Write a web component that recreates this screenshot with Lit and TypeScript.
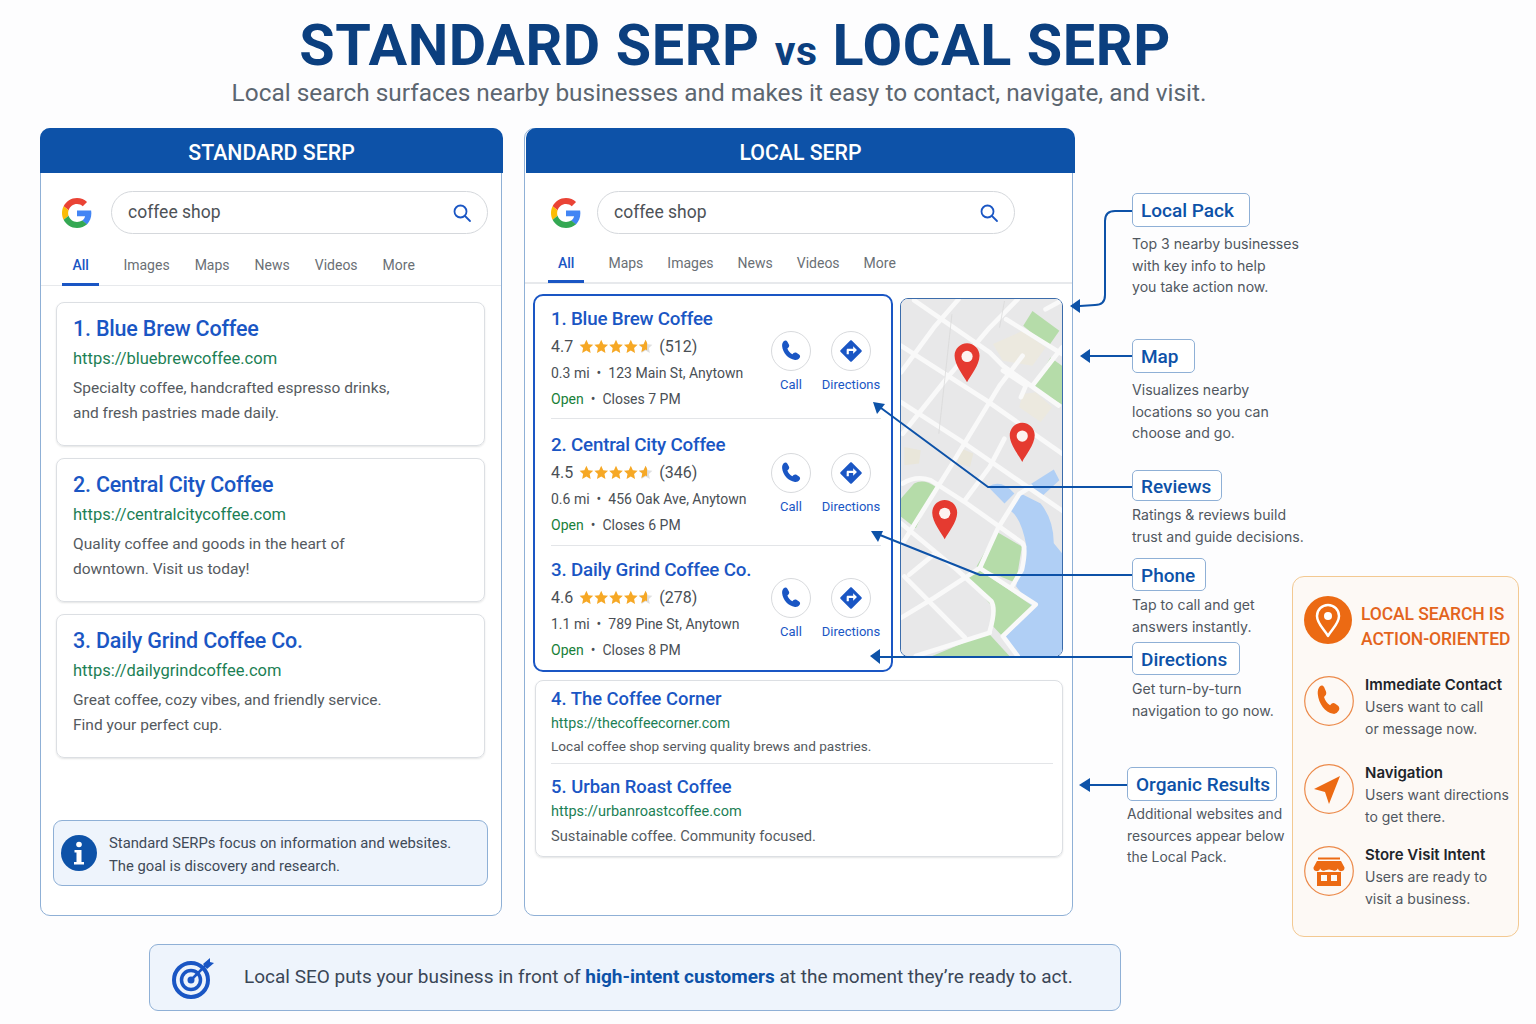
import { LitElement, html, css, svg } from 'lit';
import { customElement } from 'lit/decorators.js';

const standardResults = [
  { title: '1. Blue Brew Coffee', url: 'https://bluebrewcoffee.com', lines: ['Specialty coffee, handcrafted espresso drinks,', 'and fresh pastries made daily.'] },
  { title: '2. Central City Coffee', url: 'https://centralcitycoffee.com', lines: ['Quality coffee and goods in the heart of', 'downtown. Visit us today!'] },
  { title: '3. Daily Grind Coffee Co.', url: 'https://dailygrindcoffee.com', lines: ['Great coffee, cozy vibes, and friendly service.', 'Find your perfect cup.'] },
];

const localResults = [
  { title: '1. Blue Brew Coffee', rating: '4.7', count: '(512)', dist: '0.3 mi', addr: '123 Main St, Anytown', closes: 'Closes 7 PM' },
  { title: '2. Central City Coffee', rating: '4.5', count: '(346)', dist: '0.6 mi', addr: '456 Oak Ave, Anytown', closes: 'Closes 6 PM' },
  { title: '3. Daily Grind Coffee Co.', rating: '4.6', count: '(278)', dist: '1.1 mi', addr: '789 Pine St, Anytown', closes: 'Closes 8 PM' },
];

const organicResults = [
  { title: '4. The Coffee Corner', url: 'https://thecoffeecorner.com', desc: 'Local coffee shop serving quality brews and pastries.' },
  { title: '5. Urban Roast Coffee', url: 'https://urbanroastcoffee.com', desc: 'Sustainable coffee. Community focused.' },
];

const callouts = [
  { label: 'Local Pack', lines: ['Top 3 nearby businesses', 'with key info to help', 'you take action now.'] },
  { label: 'Map', lines: ['Visualizes nearby', 'locations so you can', 'choose and go.'] },
  { label: 'Reviews', lines: ['Ratings & reviews build', 'trust and guide decisions.'] },
  { label: 'Phone', lines: ['Tap to call and get', 'answers instantly.'] },
  { label: 'Directions', lines: ['Get turn-by-turn', 'navigation to go now.'] },
  { label: 'Organic Results', lines: ['Additional websites and', 'resources appear below', 'the Local Pack.'] },
];

const PHONE = 'M6 3.5c1-.8 2.3-.5 2.9.5l1.3 2.4c.5.9.3 1.9-.4 2.6l-.9.8c.6 1.9 2.3 3.9 4.3 4.9l1-.9c.7-.6 1.7-.7 2.5-.2l2.2 1.4c1 .6 1.2 1.9.5 2.8-1 1.3-2.5 2.2-4 1.9C9.500 19 5 13.500 4.400 8 4.200 6.200 4.800 4.500 6 3.500z';
const TURN = 'M21.710 11.290l-9-9c-.39-.39-1.020-.39-1.410 0l-9 9c-.39.39-.39 1.020 0 1.410l9 9c.39.39 1.020.39 1.410 0l9-9c.39-.38.39-1.010 0-1.410zM14 14.500V12h-4v3H8v-4c0-.55.45-1 1-1h5V7.500l3.500 3.500-3.500 3.500z';
const STAR = 'M6.500 0.600l1.800 3.900 4.200.5-3.100 2.900.8 4.200-3.700-2.100-3.700 2.100.8-4.200L.5 5l4.200-.5z';

const googleG = html`<svg class="g-logo" viewBox="0 0 48 48">
  <path fill="#EA4335" d="M24 9.500c3.540 0 6.710 1.220 9.210 3.600l6.850-6.850C35.900 2.380 30.470 0 24 0 14.620 0 6.510 5.380 2.560 13.220l7.980 6.190C12.430 13.720 17.740 9.500 24 9.500z"/>
  <path fill="#4285F4" d="M46.980 24.550c0-1.570-.15-3.090-.38-4.550H24v9.020h12.940c-.58 2.960-2.260 5.480-4.780 7.180l7.730 6c4.510-4.180 7.090-10.360 7.090-17.650z"/>
  <path fill="#FBBC05" d="M10.530 28.590c-.48-1.450-.76-2.990-.76-4.590s.27-3.140.76-4.590l-7.980-6.190C.92 16.460 0 20.120 0 24c0 3.880.92 7.540 2.560 10.780l7.970-6.190z"/>
  <path fill="#34A853" d="M24 48c6.480 0 11.930-2.130 16.030-5.810l-7.730-6c-2.150 1.450-4.920 2.300-8.300 2.300-6.260 0-11.570-4.220-13.470-9.910l-7.980 6.190C6.510 42.620 14.620 48 24 48z"/>
</svg>`;

const searchIcon = html`<svg class="search-icon" viewBox="0 0 20 20" fill="none" stroke="#1a56c4" stroke-width="1.800" stroke-linecap="round">
  <circle cx="8.500" cy="8.500" r="6"/><path d="M13 13l5 5"/>
</svg>`;

const stars = html`<svg class="stars" viewBox="0 0 65 13">
  ${[0, 13, 26, 39].map((x) => svg`<path transform="translate(${x} 0)" fill="#f6a825" d=${STAR}/>`)}
  <path transform="translate(52 0)" fill="#dfdfdf" d=${STAR}/>
  <path transform="translate(52 0)" fill="#f6a825" d="M6.500 0.600l1.300 2.800v6.500l-1.300-.7-3.700 2.100.8-4.200L.5 5l4.200-.5z"/>
</svg>`;

// tip is the point of the marker, in map drawing units
const pin = (cx: number, tip: number) => svg`
  <path fill="#e53a30" d="M${cx} ${tip}c-9-18-38-52-38-80 0-21 17-38 38-38s38 17 38 38c0 28-29 62-38 80z"/>
  <circle cx=${cx} cy=${tip - 78} r="17" fill="#fdf3f0"/>`;

const roads = [
  'M70 28L300 185L340 225L510 345',
  'M350 85L520 190',
  'M30 165L290 330L520 490',
  'M30 335L210 450L400 580L525 665',
  'M35 580Q75 555 120 570L230 640L400 760Q412 775 398 840L368 890',
  'M30 700L200 840L305 935Q320 960 300 1025',
  'M270 835L440 945L340 1040L385 1100',
  'M40 860L225 1045',
  'M30 245L130 110L205 25',
  'M35 430L170 262L300 110L385 25',
  'M35 760L180 530L330 285L400 195',
  'M225 630L300 530L345 445',
  'M430 285L520 170',
  'M30 985L130 925L270 835L325 715L390 612L425 590',
  'M55 855L135 790',
  'M75 1100L300 1030',
  'M340 240L410 285L395 320',
  'M470 55L520 28',
];

const mapArt = html`<svg class="map-art" viewBox="30 24 490 1076" preserveAspectRatio="none">
  <rect x="30" y="24" width="490" height="1076" fill="#e8e8e9"/>
  <path fill="#ece9df" d="M310 160L400 120L470 170L430 225L340 210z"/>
  <path fill="#ece9df" d="M400 310L440 305L490 350L455 395L390 350z"/>
  <path fill="#e9e6da" d="M215 475L250 490L240 530L200 520z"/>
  <path fill="#e9e6da" d="M40 470L90 480L85 520L40 525z"/>
  <path fill="#b5dca9" d="M430 60L512 120L478 168L402 105z"/>
  <path fill="#b5dca9" d="M485 200L520 225V342L430 290z"/>
  <path fill="#b5dca9" d="M30 625L70 580Q100 565 135 590L75 715L30 680z"/>
  <path fill="#b5dca9" d="M320 725L398 770L380 880L260 830z"/>
  <path fill="#b5dca9" d="M225 855L260 835L432 950L335 1037L310 1010L315 960z"/>
  <path fill="#b5dca9" d="M125 1100L295 1030L360 1100z"/>
  <path fill="#b0cff5" d="M295 590Q335 565 375 610L345 640z"/>
  <path fill="#b0cff5" d="M412 590L495 538L512 570L455 622z"/>
  <path fill="#b0cff5" d="M390 608L455 640Q495 690 495 760L520 790V1100H382L345 1045L432 955L380 890L412 770Q395 680 360 660z"/>
  <g fill="none" stroke="#f9f9f9" stroke-width="14" stroke-linejoin="round" stroke-linecap="round">
    ${roads.map((d) => svg`<path d=${d}/>`)}
  </g>
  <path d="M185 70L145 430M345 30L330 110" stroke="#d6d6d6" stroke-width="2" fill="none"/>
  ${pin(231, 275)}
  ${pin(399, 515)}
  ${pin(163, 748)}
</svg>`;

const connectors = html`<svg class="connectors" viewBox="0 0 1536 1024" fill="none" stroke="#0d52a8" stroke-width="2" stroke-linejoin="round">
  <path d="M1132 211H1115Q1105 211 1105 221V295Q1105 305 1095 305L1080 306"/>
  <path d="M1132 356H1090"/>
  <path d="M1132 487H988L881 408"/>
  <path d="M1132 575H980L880 535"/>
  <path d="M1132 657H880"/>
  <path d="M1127 785H1090"/>
  <g fill="#0d52a8" stroke="none">
    <path d="M1070 306L1080 299V313z"/>
    <path d="M1080 356L1090 349V363z"/>
    <path d="M873 402L885 404L877 414z"/>
    <path d="M871 531L883 531L878 542z"/>
    <path d="M870 656L880 649V664z"/>
    <path d="M1079 785L1090 778V792z"/>
  </g>
</svg>`;

@customElement('app-root')
export class AppRoot extends LitElement {
  static styles = css`
    :host {
      display: block;
      position: relative;
      width: 1536px;
      height: 1024px;
      overflow: hidden;
      background: #fdfdfe;
      font-family: Roboto, 'Liberation Sans', sans-serif;
      color: #555a60;
    }

    .top {
      width: 1470px;
      text-align: center;
      padding-top: 12px;
    }
    h1 {
      margin: 0;
      height: 66px;
      line-height: 68px;
      font-size: 57.500px;
      font-weight: 700;
      letter-spacing: 0.6px;
      color: #0b3f7f;
    }
    h1 small {
      font-size: 41px;
    }
    .subtitle {
      height: 32px;
      line-height: 30px;
      padding-right: 32px;
      font-size: 24.400px;
      color: #5c6670;
    }

    .main {
      display: flex;
      margin: 18px 0 0 40px;
      height: 788px;
    }
    .panel {
      box-sizing: border-box;
      background: #fff;
      border: 1px solid #8fb0d6;
      border-radius: 10px;
      height: 788px;
    }
    .panel.standard {
      width: 462px;
    }
    .panel.local {
      width: 549px;
      margin-left: 22px;
    }
    .panel-head {
      height: 45px;
      line-height: 49px;
      margin: -1px -2px 0 -1px;
      background: #0d52a8;
      color: #fff;
      border-radius: 10px 10px 0 0;
      text-align: center;
      font-size: 21.300px;
      font-weight: 500;
    }
    .local .panel-head {
      margin: -1px -3px 0 1px;
    }

    .search {
      display: flex;
      align-items: center;
      height: 43px;
      margin-top: 18px;
    }
    .standard .search {
      padding: 0 13px 0 21px;
      gap: 19px;
    }
    .local .search {
      padding: 0 57px 0 26px;
      gap: 16px;
    }
    .g-logo {
      width: 30px;
      height: 32px;
      flex: none;
    }
    .pill {
      flex: 1;
      display: flex;
      align-items: center;
      justify-content: space-between;
      height: 100%;
      box-sizing: border-box;
      padding: 0 15px 2px 16px;
      border: 1px solid #d5d8dc;
      border-radius: 22px;
      font-size: 17.500px;
      color: #4d5257;
    }
    .search-icon {
      width: 20px;
      height: 20px;
      margin-top: 2px;
    }

    .tabs {
      display: flex;
      gap: 25px;
      border-bottom: 1px solid #e7e9ec;
      font-size: 14px;
      color: #6a6f75;
      height: 42px;
      margin-top: 9px;
      line-height: 45px;
    }
    .local .tabs {
      gap: 24px;
      height: 39px;
      margin-top: 9px;
      line-height: 41px;
      border-bottom-width: 2px;
    }
    .standard .tabs {
      padding-left: 21px;
    }
    .local .tabs {
      padding-left: 23px;
    }
    .tab-all {
      color: #1a56c4;
      font-weight: 500;
      padding: 0 10.500px;
      margin-right: -1px;
      border-bottom: 3px solid #1a56c4;
      height: 40px;
    }
    .local .tab-all {
      padding: 0 10px;
      margin-right: 0;
      height: 37px;
    }

    .std-list {
      display: flex;
      flex-direction: column;
      gap: 12px;
      margin: 16px 16px 0 15px;
    }
    .std-card {
      box-sizing: border-box;
      height: 144px;
      padding: 11px 16px;
      border: 1px solid #dcdfe3;
      border-radius: 8px;
      box-shadow: 0 1px 2px rgba(60, 64, 67, 0.14);
    }
    .std-title {
      font-size: 21.500px;
      letter-spacing: -0.2px;
      line-height: 30px;
      font-weight: 500;
      color: #1a56c4;
    }
    .std-url {
      font-size: 16.500px;
      line-height: 30px;
      color: #1c7f55;
    }
    .std-desc {
      margin-top: 2px;
      font-size: 15.500px;
      line-height: 25px;
    }

    .info {
      display: flex;
      align-items: center;
      gap: 12px;
      box-sizing: border-box;
      height: 66px;
      margin: 62px 13px 0 12px;
      padding-left: 7px;
      border: 1px solid #8fb0d6;
      border-radius: 9px;
      background: #eef4fc;
      font-size: 14.800px;
      line-height: 23px;
      color: #3f4a58;
    }
    .info > div {
      padding-top: 4px;
    }
    .info svg {
      width: 36px;
      height: 36px;
      flex: none;
    }

    .local-top {
      display: flex;
      gap: 7px;
      margin: 10px 9px 0 8px;
      align-items: flex-start;
    }
    .pack {
      box-sizing: border-box;
      width: 360px;
      height: 378px;
      flex: none;
      padding: 0 10px 0 16px;
      border: 2px solid #1a56c4;
      border-radius: 10px;
    }
    .pack-item {
      display: flex;
      justify-content: space-between;
      border-bottom: 1px solid #e3e5e8;
    }
    .pack-item:nth-child(1) {
      height: 123px;
      padding-top: 9px;
      box-sizing: border-box;
    }
    .pack-item:nth-child(2) {
      height: 127px;
      padding-top: 12px;
      box-sizing: border-box;
    }
    .pack-item:nth-child(3) {
      padding-top: 10px;
      border-bottom: 0;
    }
    .pack-title {
      font-size: 18.800px;
      letter-spacing: -0.2px;
      font-weight: 500;
      line-height: 28px;
      color: #1a56c4;
      white-space: nowrap;
    }
    .pack-rating {
      display: flex;
      align-items: center;
      gap: 6px;
      font-size: 16px;
      height: 27px;
      color: #4a4f55;
    }
    .stars {
      width: 74px;
      height: 15px;
    }
    .pack-line {
      font-size: 14px;
      color: #4a4f55;
      height: 27px;
      line-height: 27px;
      white-space: nowrap;
    }
    .pack-line + .pack-line {
      height: 25px;
      line-height: 25px;
    }
    .dot {
      margin: 0 7px;
    }
    .open {
      color: #188038;
    }
    .actions {
      display: flex;
      margin-top: 22px;
    }
    .pack-item:nth-child(1) .actions {
      margin-top: 26px;
    }
    .action {
      width: 60px;
      text-align: center;
      font-size: 13px;
      color: #1a56c4;
    }
    .circle {
      box-sizing: border-box;
      width: 40px;
      height: 40px;
      margin: 0 auto 6px;
      display: flex;
      align-items: center;
      justify-content: center;
      border: 1px solid #d8dadd;
      border-radius: 50%;
    }
    .circle svg {
      width: 26px;
      height: 26px;
      fill: #1a56c4;
    }
    .action:first-child .circle svg {
      width: 28px;
      height: 28px;
    }
    .map {
      width: 163px;
      height: 359px;
      margin-top: 4px;
      flex: none;
      box-sizing: border-box;
      border: 1.500px solid #3b6cab;
      border-radius: 8px;
      overflow: hidden;
    }
    .map-art {
      display: block;
      width: 100%;
      height: 100%;
    }

    .organic {
      box-sizing: border-box;
      height: 177px;
      margin: 8px 9px 0 10px;
      padding: 5px 9px 0 15px;
      border: 1px solid #dcdfe3;
      border-radius: 8px;
      box-shadow: 0 1px 2px rgba(60, 64, 67, 0.14);
    }
    .org-item + .org-item {
      border-top: 1px solid #e3e5e8;
      margin-top: 6px;
      padding-top: 10px;
    }
    .org-item + .org-item .org-url {
      font-size: 14.500px;
      line-height: 24px;
    }
    .org-item + .org-item .org-desc {
      margin-top: 1px;
      font-size: 14.700px;
    }
    .org-title {
      font-size: 18.400px;
      font-weight: 500;
      line-height: 26px;
      color: #1a56c4;
    }
    .org-url {
      font-size: 14.300px;
      line-height: 23px;
      color: #1c7f55;
    }
    .org-desc {
      font-size: 13.600px;
      line-height: 22px;
    }

    .notes {
      box-sizing: border-box;
      width: 160px;
      flex: none;
      margin-left: 59px;
      padding-top: 65px;
      display: grid;
      grid-template-rows: 146px 131px 88px 84px 125px auto;
      font-family: Inter, Roboto, sans-serif;
    }
    .note:last-child {
      margin-left: -5px;
    }
    .note-label {
      display: inline-block;
      box-sizing: border-box;
      height: 34px;
      line-height: 33px;
      padding: 0 10px 0 8px;
      background: #fff;
      border: 1px solid #8fb0d6;
      border-radius: 5px;
      font-size: 19px;
      font-weight: 500;
      color: #0d52a8;
      font-family: Roboto, sans-serif;
    }
    .note:nth-child(1) .note-label,
    .note:nth-child(2) .note-label {
      padding-right: 15px;
    }
    .note:nth-child(3) .note-label {
      height: 31px;
      line-height: 31px;
    }
    .note:nth-child(4) .note-label,
    .note:nth-child(5) .note-label {
      height: 33px;
    }
    .note:nth-child(5) .note-label {
      padding-right: 12px;
    }
    .note:nth-child(6) .note-label {
      padding-right: 6px;
    }
    .note-text {
      margin-top: 6px;
      font-size: 14.100px;
      line-height: 21.500px;
      color: #50575f;
      white-space: nowrap;
    }
    .note:nth-child(n + 3) .note-text {
      margin-top: 3px;
    }
    .note:nth-child(6) .note-text {
      font-size: 13.800px;
    }

    .action-card {
      box-sizing: border-box;
      width: 227px;
      height: 361px;
      flex: none;
      margin-top: 448px;
      padding: 19px 8px 0 11px;
      background: #fdf9f5;
      border: 1px solid #f3c992;
      border-radius: 12px;
      font-family: Inter, Roboto, sans-serif;
    }
    .ac-head {
      display: flex;
      gap: 9px;
      height: 50px;
      font-family: Roboto, sans-serif;
      font-size: 17.500px;
      letter-spacing: -0.1px;
      font-weight: 500;
      line-height: 25px;
      color: #e3641c;
      white-space: nowrap;
    }
    .ac-head > div {
      padding-top: 6px;
    }
    .ac-head svg {
      width: 48px;
      height: 48px;
      flex: none;
    }
    .ac-row {
      display: flex;
      gap: 11px;
    }
    .ac-row svg {
      width: 50px;
      height: 50px;
      margin-top: 2px;
      flex: none;
    }
    .ac-row:nth-child(2) {
      margin-top: 28px;
      height: 88px;
    }
    .ac-row:nth-child(3) {
      height: 82px;
    }
    .ac-title {
      font-size: 15px;
      line-height: 22px;
      font-weight: 600;
      color: #20242a;
    }
    .ac-text {
      font-size: 14px;
      line-height: 22px;
      color: #50575f;
      white-space: nowrap;
    }

    .banner {
      display: flex;
      align-items: center;
      gap: 30px;
      box-sizing: border-box;
      width: 972px;
      height: 67px;
      margin: 28px 0 0 149px;
      padding: 0 0 3px 22px;
      background: #eef4fc;
      border: 1px solid #8fb0d6;
      border-radius: 9px;
      font-size: 19px;
      color: #3a4656;
    }
    .banner svg {
      width: 42px;
      height: 42px;
      flex: none;
      margin-top: 3px;
    }
    .banner b {
      font-weight: 700;
      color: #0d52a8;
    }

    .connectors {
      position: absolute;
      left: 0;
      top: 0;
      width: 1536px;
      height: 1024px;
      pointer-events: none;
    }
  `;

  renderTabs(tabs: string[]) {
    return html`<div class="tabs">
      <div class="tab-all">All</div>
      ${tabs.map((t) => html`<div>${t}</div>`)}
    </div>`;
  }

  renderSearch() {
    return html`<div class="search">
      ${googleG}
      <div class="pill"><span>coffee shop</span>${searchIcon}</div>
    </div>`;
  }

  renderPackItem(r: (typeof localResults)[number]) {
    return html`<div class="pack-item">
      <div>
        <div class="pack-title">${r.title}</div>
        <div class="pack-rating"><span>${r.rating}</span>${stars}<span>${r.count}</span></div>
        <div class="pack-line">${r.dist}<span class="dot">•</span>${r.addr}</div>
        <div class="pack-line"><span class="open">Open</span><span class="dot">•</span>${r.closes}</div>
      </div>
      <div class="actions">
        <div class="action">
          <div class="circle"><svg viewBox="0 0 24 24"><path d=${PHONE}/></svg></div>
          Call
        </div>
        <div class="action">
          <div class="circle"><svg viewBox="0 0 24 24"><path d=${TURN}/></svg></div>
          Directions
        </div>
      </div>
    </div>`;
  }

  render() {
    return html`
      <div class="top">
        <h1>STANDARD SERP <small>vs</small> LOCAL SERP</h1>
        <div class="subtitle">Local search surfaces nearby businesses and makes it easy to contact, navigate, and visit.</div>
      </div>

      <div class="main">
        <section class="panel standard">
          <div class="panel-head">STANDARD SERP</div>
          ${this.renderSearch()}
          ${this.renderTabs(['Images', 'Maps', 'News', 'Videos', 'More'])}
          <div class="std-list">
            ${standardResults.map(
              (r) => html`<div class="std-card">
                <div class="std-title">${r.title}</div>
                <div class="std-url">${r.url}</div>
                <div class="std-desc">${r.lines[0]}<br />${r.lines[1]}</div>
              </div>`
            )}
          </div>
          <div class="info">
            <svg viewBox="0 0 36 36">
              <circle cx="18" cy="18" r="18" fill="#0d52a8" />
              <circle cx="18" cy="9.500" r="2.800" fill="#fff" />
              <path fill="#fff" d="M13.500 15h7v12h2.500v2.500H13V27h2.500v-9.500h-2z" />
            </svg>
            <div>Standard SERPs focus on information and websites.<br />The goal is discovery and research.</div>
          </div>
        </section>

        <section class="panel local">
          <div class="panel-head">LOCAL SERP</div>
          ${this.renderSearch()}
          ${this.renderTabs(['Maps', 'Images', 'News', 'Videos', 'More'])}
          <div class="local-top">
            <div class="pack">${localResults.map((r) => this.renderPackItem(r))}</div>
            <div class="map">${mapArt}</div>
          </div>
          <div class="organic">
            ${organicResults.map(
              (r) => html`<div class="org-item">
                <div class="org-title">${r.title}</div>
                <div class="org-url">${r.url}</div>
                <div class="org-desc">${r.desc}</div>
              </div>`
            )}
          </div>
        </section>

        <div class="notes">
          ${callouts.map(
            (c) => html`<div class="note">
              <div class="note-label">${c.label}</div>
              <div class="note-text">${c.lines.map((l) => html`${l}<br />`)}</div>
            </div>`
          )}
        </div>

        <aside class="action-card">
          <div class="ac-head">
            <svg viewBox="0 0 48 48">
              <circle cx="24" cy="24" r="24" fill="#ec6a13" />
              <path fill="none" stroke="#fff" stroke-width="2.500" stroke-linejoin="round" d="M24 40c-3-6-11-12-11-20a11 11 0 0 1 22 0c0 8-8 14-11 20z" />
              <circle cx="24" cy="20" r="4" fill="#fff" />
            </svg>
            <div>LOCAL SEARCH IS<br />ACTION-ORIENTED</div>
          </div>
          <div class="ac-row">
            <svg viewBox="0 0 50 50">
              <circle cx="25" cy="25" r="24.300" fill="none" stroke="#ec8a4a" stroke-width="1.200" />
              <path fill="#ec6a13" transform="translate(7.600 4.300) scale(1.400 1.700)" d=${PHONE} />
            </svg>
            <div>
              <div class="ac-title">Immediate Contact</div>
              <div class="ac-text">Users want to call<br />or message now.</div>
            </div>
          </div>
          <div class="ac-row">
            <svg viewBox="0 0 50 50">
              <circle cx="25" cy="25" r="24.300" fill="none" stroke="#ec8a4a" stroke-width="1.200" />
              <path fill="#ec6a13" d="M36 12L10 25L21 28L25 40z" />
            </svg>
            <div>
              <div class="ac-title">Navigation</div>
              <div class="ac-text">Users want directions<br />to get there.</div>
            </div>
          </div>
          <div class="ac-row">
            <svg viewBox="0 0 50 50">
              <circle cx="25" cy="25" r="24.300" fill="none" stroke="#ec8a4a" stroke-width="1.200" />
              <path fill="#ec6a13" d="M14 11.500h22v2H14z" />
              <path fill="#ec6a13" d="M13 15h24l3.500 6.500a3.400 3.400 0 0 1-6.700 1 3.400 3.400 0 0 1-5 1.800l-3.800-.8-3.800.8a3.400 3.400 0 0 1-5-1.800 3.400 3.400 0 0 1-6.700-1z" />
              <path fill="#ec6a13" fill-rule="evenodd" d="M13 26h24v14H13zM17 29v6h6v-6zM27 29v6h6v-6z" />
            </svg>
            <div>
              <div class="ac-title">Store Visit Intent</div>
              <div class="ac-text">Users are ready to<br />visit a business.</div>
            </div>
          </div>
        </aside>
      </div>

      <div class="banner">
        <svg viewBox="0 0 42 42" fill="none" stroke="#1a56c4">
          <circle cx="19" cy="23" r="17" stroke-width="4" />
          <circle cx="19" cy="23" r="9.500" stroke-width="3.500" />
          <circle cx="19" cy="23" r="3.500" fill="#1a56c4" stroke="none" />
          <path d="M19 23L34 8" stroke-width="2.500" />
          <path d="M31 7L38 1L38 5L42 6L35 12z" fill="#1a56c4" stroke="none" />
        </svg>
        <div>Local SEO puts your business in front of <b>high-intent customers</b> at the moment they’re ready to act.</div>
      </div>

      ${connectors}
    `;
  }
}
